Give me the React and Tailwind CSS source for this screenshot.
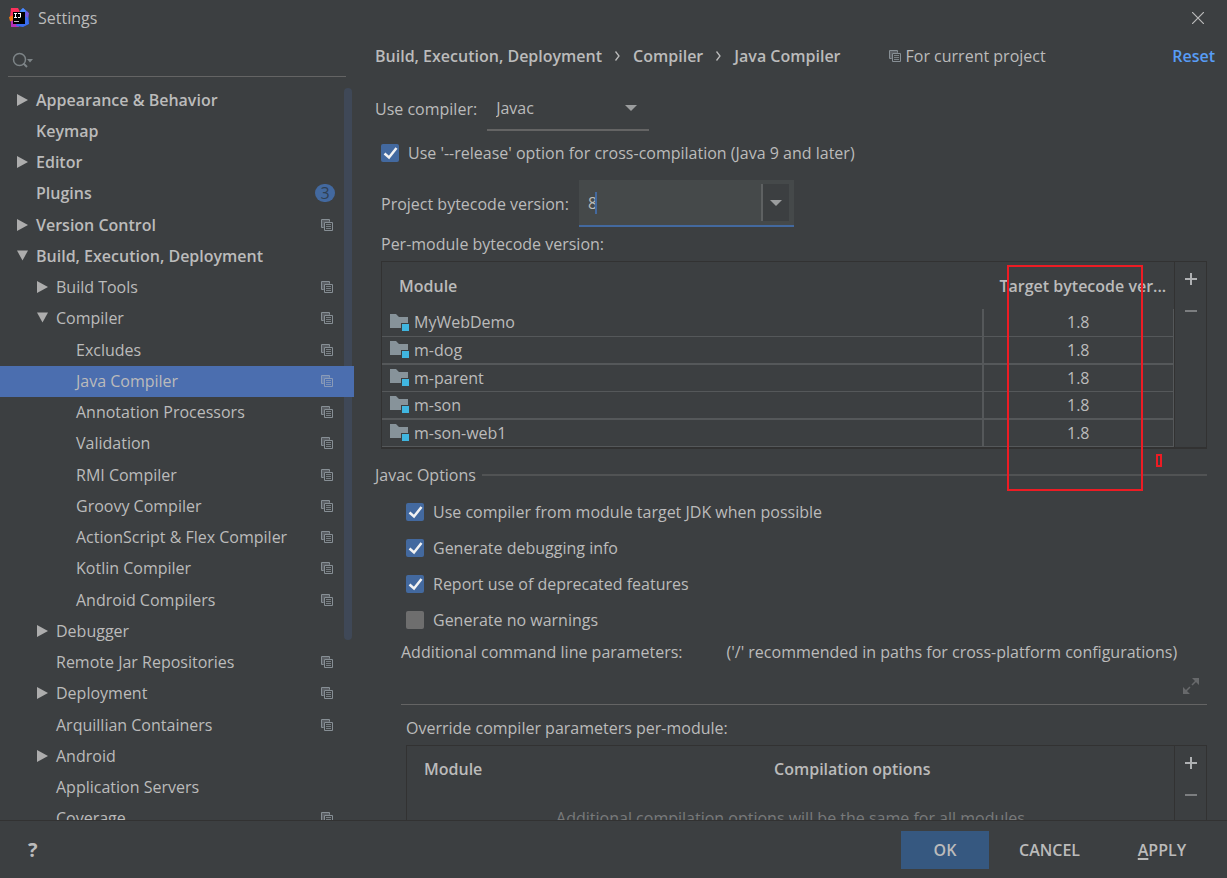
import React from "react";

const tree = [
  { label: "Appearance & Behavior", level: 0, arrow: "right" },
  { label: "Keymap", level: 0 },
  { label: "Editor", level: 0, arrow: "right" },
  { label: "Plugins", level: 0, badge: 3 },
  { label: "Version Control", level: 0, arrow: "right", project: true },
  { label: "Build, Execution, Deployment", level: 0, arrow: "down" },
  { label: "Build Tools", level: 1, arrow: "right", project: true },
  { label: "Compiler", level: 1, arrow: "down", project: true },
  { label: "Excludes", level: 2, project: true },
  { label: "Java Compiler", level: 2, project: true, selected: true },
  { label: "Annotation Processors", level: 2, project: true },
  { label: "Validation", level: 2, project: true },
  { label: "RMI Compiler", level: 2, project: true },
  { label: "Groovy Compiler", level: 2, project: true },
  { label: "ActionScript & Flex Compiler", level: 2, project: true },
  { label: "Kotlin Compiler", level: 2, project: true },
  { label: "Android Compilers", level: 2, project: true },
  { label: "Debugger", level: 1, arrow: "right" },
  { label: "Remote Jar Repositories", level: 1, project: true },
  { label: "Deployment", level: 1, arrow: "right", project: true },
  { label: "Arquillian Containers", level: 1, project: true },
  { label: "Android", level: 1, arrow: "right" },
  { label: "Application Servers", level: 1 },
  { label: "Coverage", level: 1, project: true },
];

const indents = ["pl-4", "pl-9", "pl-14"];

const modules = ["MyWebDemo", "m-dog", "m-parent", "m-son", "m-son-web1"];

const javacOptions = [
  { id: "module-jdk", label: "Use compiler from module target JDK when possible", checked: true },
  { id: "debug-info", label: "Generate debugging info", checked: true },
  { id: "deprecated", label: "Report use of deprecated features", checked: true },
  { id: "no-warnings", label: "Generate no warnings", checked: false },
];

function Logo() {
  return (
    <svg width="20" height="20" viewBox="0 0 20 20" aria-hidden="true">
      <path d="M2 0 9 0 12 6 6 17 1 9z" fill="#fe315d" />
      <path d="M0 9 5 7 6 15 1 13z" fill="#f97a12" />
      <path d="M2 13 8 11 10 19 2 19z" fill="#b630b8" />
      <path d="M11 3 14 0 19 4 20 16 14 19 7 18z" fill="#3a6df0" />
      <path d="M11 3 14 0 17 3 15 6z" fill="#4a8cff" />
      <path d="M17 3 20 5 19 10 16 8z" fill="#7a55dc" />
      <rect x="4" y="4" width="12" height="12" fill="#000" />
      <path d="M5 5h3v1h-1v3h1v1h-3v-1h1v-3h-1zM9 5h3v4l-1 1h-2v-1h2v-3h-2z" fill="#fff" />
      <rect x="5" y="13" width="5" height="1" fill="#bbb" />
    </svg>
  );
}

function ProjectIcon({ selected }) {
  return (
    <svg
      width="12"
      height="12"
      viewBox="0 0 12 12"
      className={`shrink-0 ${selected ? "text-[#8a9bb8]" : "text-[#878f95]"}`}
      aria-hidden="true"
    >
      <path d="M2.500 8.500h-2v-8h8v2" fill="none" stroke="currentColor" />
      <path d="M1 1h8v2h-6v6h-2z" fill="currentColor" opacity=".4" />
      <path d="M3.500 3.500h8v8h-8z" fill="none" stroke="currentColor" />
      <path d="M5 5.500h5M5 7.500h5M5 9.500h5" stroke="currentColor" opacity=".8" />
    </svg>
  );
}

function TreeArrow({ direction }) {
  return (
    <svg width="12" height="12" viewBox="0 0 12 12" className="shrink-0" aria-hidden="true">
      <path d={direction === "down" ? "M1 .5h11L6.500 10.500z" : "M1 0v12L12 6z"} fill="#adadad" />
    </svg>
  );
}

function DropArrow() {
  return (
    <svg width="12" height="6" viewBox="0 0 12 6" aria-hidden="true">
      <path d="M0 0h12L6 6z" fill="#9b9d9e" />
    </svg>
  );
}

function FolderIcon() {
  return (
    <svg width="20" height="19" viewBox="0 0 20 19" className="shrink-0" aria-hidden="true">
      <path d="M0 1h6l3 3h9v6h-7v5H0z" fill="#87939a" />
      <rect x="12" y="11" width="7" height="7" fill="#40b6e0" />
    </svg>
  );
}

function Chevron() {
  return (
    <svg width="5" height="10" viewBox="0 0 5 10" className="shrink-0" aria-hidden="true">
      <path d="M.5.5 4 5 .5 9.500" fill="none" stroke="#bbbbbb" strokeWidth="1.300" />
    </svg>
  );
}

function Checkbox({ id, label, checked }) {
  return (
    <div className="flex items-center gap-[9px]">
      <span className="relative flex">
        <input
          id={id}
          type="checkbox"
          defaultChecked={checked}
          className="peer size-[18px] appearance-none rounded-xs bg-[#6e6e6e] checked:bg-[#43699f]"
        />
        <svg
          width="18"
          height="18"
          viewBox="0 0 18 18"
          className="pointer-events-none absolute inset-0 hidden peer-checked:block"
          aria-hidden="true"
        >
          <path d="M3.500 9.500 8 13.500 15.500 4" fill="none" stroke="#f2f2f2" strokeWidth="2.500" />
        </svg>
      </span>
      <label htmlFor={id}>{label}</label>
    </div>
  );
}

function TableActions() {
  return (
    <div className="flex w-8 shrink-0 flex-col items-center border-l border-[#323232] pt-[10px]">
      <button type="button" aria-label="Add" className="flex h-8 items-start">
        <svg width="14" height="14" viewBox="0 0 14 14" aria-hidden="true">
          <path d="M7 1v12M1 7h12" stroke="#afb1b3" strokeWidth="2" />
        </svg>
      </button>
      <button type="button" aria-label="Remove" className="flex h-8 items-start">
        <svg width="14" height="14" viewBox="0 0 14 14" aria-hidden="true">
          <path d="M1 7h12" stroke="#7c7e80" strokeWidth="2" />
        </svg>
      </button>
    </div>
  );
}

function Sidebar() {
  return (
    <aside className="relative flex w-[354px] shrink-0 flex-col overflow-hidden">
      <div className="mx-2 mt-2 flex h-[33px] shrink-0 items-center border-b border-[#646464] pl-1">
        <svg width="22" height="17" viewBox="0 0 22 17" className="shrink-0" aria-hidden="true">
          <circle cx="7.500" cy="7.500" r="6" fill="none" stroke="#7d8487" strokeWidth="1.500" />
          <path d="M11.500 11.500 15 15" stroke="#7d8487" strokeWidth="2" />
          <path d="M15 7h6l-3 3.500z" fill="#7d8487" />
        </svg>
        <input type="text" aria-label="Search settings" className="min-w-0 flex-1 bg-transparent pl-1 outline-none" />
      </div>
      <ul className="mt-2 shrink-0">
        {tree.map((item) => (
          <li
            key={item.label}
            className={`flex h-[31px] items-center pr-[21px] pb-0.5 nth-[4n]:h-8 ${indents[item.level]} ${
              item.level === 0 ? "font-semibold" : ""
            } ${item.selected ? "bg-[#4b6eaf]" : ""}`}
          >
            <span className="flex w-5 shrink-0">{item.arrow && <TreeArrow direction={item.arrow} />}</span>
            <span className="flex-1 whitespace-nowrap">{item.label}</span>
            {item.badge && (
              <span className="-mr-0.5 flex h-[18px] w-5 items-center justify-center rounded-full bg-[#43699f] font-normal text-[#2f3f52]">
                {item.badge}
              </span>
            )}
            {item.project && <ProjectIcon selected={item.selected} />}
          </li>
        ))}
      </ul>
      <div className="absolute top-[52px] right-0.5 h-[552px] w-2 rounded-full bg-[#4b6eaf]/20" />
    </aside>
  );
}

function ModuleTable() {
  return (
    <div className="ml-1.5 flex border border-b-2 border-[#323232]">
      <div className="min-w-0 flex-1">
        <table className="w-full table-fixed border-collapse">
          <thead>
            <tr className="h-[47px] text-left">
              <th className="pl-[17px] font-semibold">Module</th>
              <th className="w-[191px] pl-[17px] font-semibold whitespace-nowrap">Target bytecode ver...</th>
            </tr>
          </thead>
          <tbody>
            {modules.map((name) => (
              <tr key={name} className="h-[27px] border-b border-[#55585a] even:h-7 even:border-b-2">
                <td className="border-r-2 border-[#55585a]">
                  <div className="flex items-center gap-1 pl-2">
                    <FolderIcon />
                    {name}
                  </div>
                </td>
                <td className="border-r border-[#55585a] text-center">1.8</td>
              </tr>
            ))}
          </tbody>
        </table>
      </div>
      <TableActions />
    </div>
  );
}

function CompilerPage() {
  return (
    <main className="min-w-0 flex-1 overflow-hidden pl-[21px]">
      <div className="flex h-10 items-center pr-3">
        <nav className="flex items-center gap-[13px] font-semibold whitespace-nowrap" aria-label="Breadcrumb">
          <span>Build, Execution, Deployment</span>
          <Chevron />
          <span>Compiler</span>
          <Chevron />
          <span>Java Compiler</span>
        </nav>
        <span className="ml-12 flex items-center gap-[5px] whitespace-nowrap">
          <ProjectIcon />
          For current project
        </span>
        <a href="#reset" className="ml-auto font-semibold text-[#589df6]">
          Reset
        </a>
      </div>

      <div className="pr-5">
        <div className="mt-2.5 flex h-[45px] items-center gap-2.5">
          <label htmlFor="compiler">Use compiler:</label>
          <div className="relative flex h-full w-[162px] items-center border-b-2 border-[#646464]">
            <select id="compiler" className="w-full appearance-none bg-transparent pl-[9px] outline-none">
              <option>Javac</option>
              <option>Eclipse</option>
            </select>
            <span className="pointer-events-none absolute right-3">
              <DropArrow />
            </span>
          </div>
        </div>

        <div className="mt-2.5 ml-1.5">
          <Checkbox id="release" label="Use '--release' option for cross-compilation (Java 9 and later)" checked />
        </div>

        <div className="mt-[15px] ml-1.5 flex items-center gap-2.5">
          <label htmlFor="bytecode">Project bytecode version:</label>
          <div className="flex h-[47px] w-[215px] border-b-2 border-[#43699f] bg-[#45494a]">
            <div className="relative flex min-w-0 flex-1 items-center">
              <input id="bytecode" type="text" defaultValue="8" className="w-full bg-transparent pl-[9px] outline-none" />
              <span className="absolute left-4 h-[22px] w-0.5 bg-[#43699f]" />
            </div>
            <button
              type="button"
              aria-label="Show versions"
              className="my-1 mr-[5px] flex w-7 items-center justify-center border-l-2 border-[#5e6162] bg-[#3c3f41]"
            >
              <DropArrow />
            </button>
          </div>
        </div>

        <div className="my-[5px] ml-1.5">Per-module bytecode version:</div>
        <ModuleTable />

        <div className="mt-3.5 flex items-center gap-1.5">
          <h2>Javac Options</h2>
          <div className="h-0.5 flex-1 bg-[#515354]" />
        </div>

        <div className="mt-[13px] ml-[31px] flex flex-col gap-3">
          {javacOptions.map((option) => (
            <Checkbox key={option.id} {...option} />
          ))}
        </div>

        <div className="mt-2 ml-[26px] flex gap-11 whitespace-nowrap">
          <label htmlFor="params">Additional command line parameters:</label>
          <span>('/' recommended in paths for cross-platform configurations)</span>
        </div>
        <div className="ml-[26px] flex h-[41px] items-center border-b border-[#646464] pt-1 pr-2">
          <input id="params" type="text" className="min-w-0 flex-1 bg-transparent outline-none" />
          <button type="button" aria-label="Expand">
            <svg width="16" height="16" viewBox="0 0 16 16" aria-hidden="true">
              <path d="M9 0h7v7zM0 9v7h7z" fill="#67696b" />
              <path d="M9 7l5-5M7 9l-5 5" stroke="#67696b" strokeWidth="1.500" />
            </svg>
          </button>
        </div>

        <div className="mt-[11px] mb-[5px] ml-[31px]">Override compiler parameters per-module:</div>
        <div className="ml-[31px] flex h-40 border border-[#323232]">
          <div className="flex-1">
            <table className="w-full table-fixed">
              <thead>
                <tr className="h-[46px] text-left">
                  <th className="w-[350px] pl-[17px] font-semibold">Module</th>
                  <th className="pl-[17px] font-semibold">Compilation options</th>
                </tr>
              </thead>
            </table>
            <p className="mt-3.5 text-center text-[#787a7b]">Additional compilation options will be the same for all modules</p>
          </div>
          <TableActions />
        </div>
      </div>
    </main>
  );
}

export default function App() {
  return (
    <div className="relative flex h-screen flex-col overflow-hidden bg-[#3c3f41] font-['Open_Sans','Noto_Sans',sans-serif] text-[16px] leading-6 text-[#bbbbbb]">
      <header className="flex h-9 shrink-0 items-center gap-[9px] pr-[23px] pl-[9px]">
        <Logo />
        <h1>Settings</h1>
        <button type="button" aria-label="Close" className="ml-auto">
          <svg width="12" height="12" viewBox="0 0 12 12" aria-hidden="true">
            <path d="M0 0 12 12M12 0 0 12" stroke="#bbbbbb" strokeWidth="1.200" />
          </svg>
        </button>
      </header>

      <div className="flex min-h-0 flex-1">
        <Sidebar />
        <CompilerPage />
      </div>

      <footer className="flex h-[58px] shrink-0 items-center border-t border-[#323232] pr-[13px] pl-7 font-semibold">
        <button type="button" aria-label="Help" className="text-[20px] font-bold">
          ?
        </button>
        <div className="ml-auto flex items-center">
          <button type="button" className="h-[38px] w-[88px] bg-[#365880]">
            OK
          </button>
          <button type="button" className="h-[38px] w-[121px]">
            CANCEL
          </button>
          <button type="button" className="h-[38px] w-[104px]">
            <span className="underline decoration-2 underline-offset-2">A</span>PPLY
          </button>
        </div>
      </footer>

      {/* Red markers drawn over the target version column */}
      <div className="pointer-events-none absolute top-[265px] right-[84px] h-[226px] w-[136px] border-2 border-[#ed1c24]" />
      <div className="pointer-events-none absolute top-[454px] right-[65px] h-[13px] w-[6px] border-2 border-[#ed1c24]" />
    </div>
  );
}
